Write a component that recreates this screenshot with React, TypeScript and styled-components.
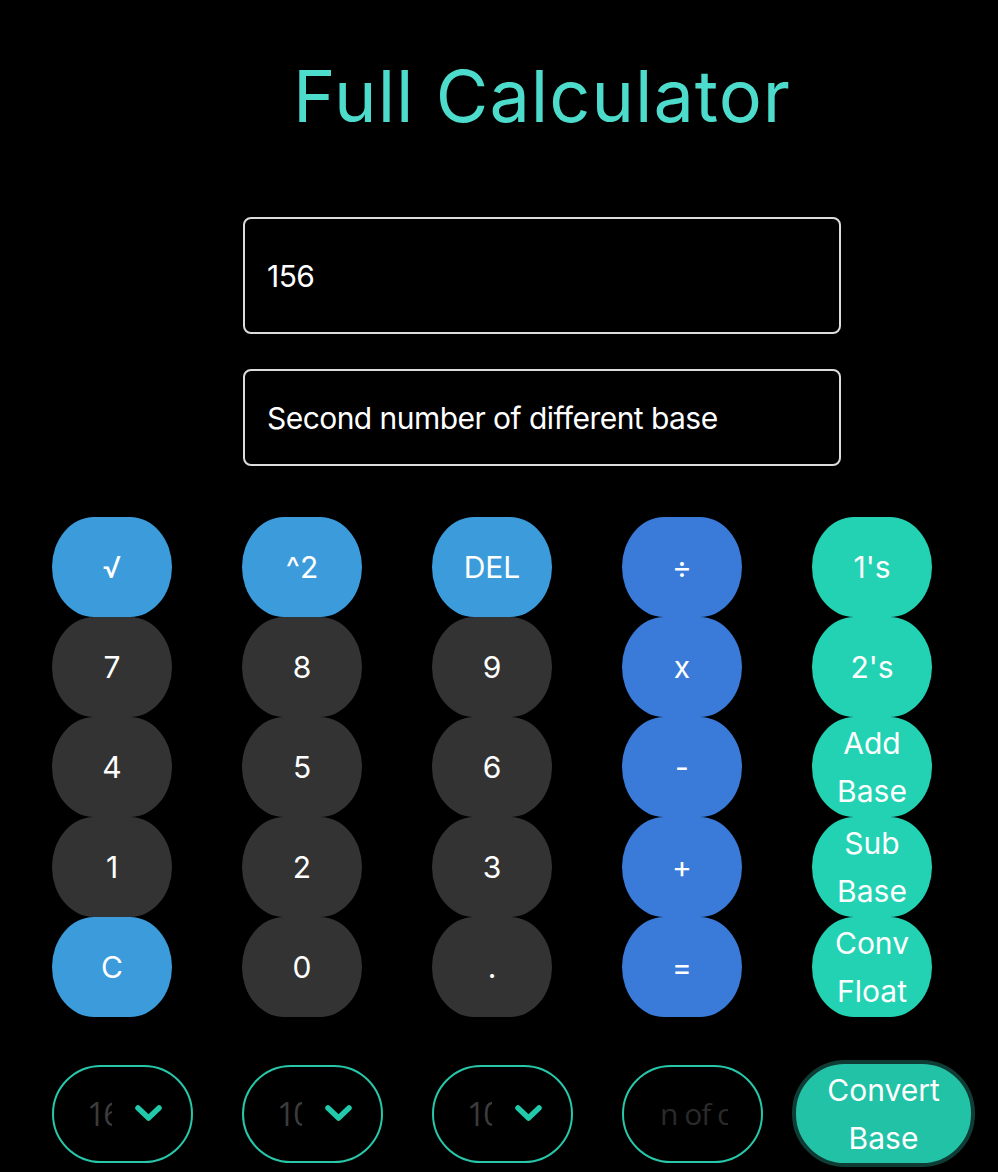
import React from "react";
import styled, { createGlobalStyle } from "styled-components";

const GlobalStyle = createGlobalStyle`
  html, body {
    margin: 0;
    padding: 0;
    background: #000;
  }
  body {
    font-family: Inter, "Liberation Sans", sans-serif;
    color: #fff;
  }
  * { box-sizing: border-box; }
`;

const Page = styled.div`
  width: 998px;
  min-height: 1172px;
  background: #000;
  padding-top: 60px;
  overflow: hidden;
`;

const Header = styled.div`
  margin-left: 86px;
  display: flex;
  flex-direction: column;
  align-items: center;
`;

const Title = styled.h1`
  margin: 0;
  font-family: Inter, "Liberation Sans", sans-serif;
  font-weight: 400;
  font-size: 72px;
  line-height: 72px;
  letter-spacing: 1px;
  color: #4ddccb;
`;

const Field = styled.input<{ $h: number; $mt: number }>`
  width: 598px;
  height: ${(p) => p.$h}px;
  margin-top: ${(p) => p.$mt}px;
  background: #000;
  border: 2px solid #dcdcdc;
  border-radius: 8px;
  padding: 0 22px;
  font-family: Inter, "Liberation Sans", sans-serif;
  font-size: 30px;
  letter-spacing: -0.55px;
  color: #fff;
  outline: none;
  &::placeholder {
    color: #fff;
    opacity: 1;
  }
`;

const Keypad = styled.div`
  margin: 51px 0 0 52px;
  display: grid;
  grid-template-columns: repeat(5, 120px);
  grid-auto-rows: 100px;
  column-gap: 70px;
`;

type Tone = "light" | "dark" | "op" | "teal";
const toneColor: Record<Tone, string> = {
  light: "#3b9bdb",
  dark: "#333333",
  op: "#3a7ad8",
  teal: "#22d2b3",
};

const Key = styled.button<{ $tone: Tone }>`
  width: 120px;
  height: 100px;
  border: none;
  border-radius: 42px / 50px;
  background: ${(p) => toneColor[p.$tone]};
  color: #fff;
  font-family: Inter, "Liberation Sans", sans-serif;
  font-size: 30px;
  line-height: 48px;
  padding: 0;
  display: flex;
  align-items: center;
  justify-content: center;
  text-align: center;
  cursor: pointer;
`;

const BottomRow = styled.div`
  margin: 43px 0 0 52px;
  display: flex;
  align-items: center;
  gap: 49px;
`;

const SelectBox = styled.div`
  width: 141px;
  height: 98px;
  border: 2px solid #27c7aa;
  border-radius: 49px;
  display: flex;
  align-items: center;
  padding-left: 33px;
  gap: 23px;
`;

const SelectValue = styled.span`
  width: 25px;
  overflow: hidden;
  white-space: nowrap;
  font-family: "Open Sans", "Liberation Sans", sans-serif;
  font-size: 32px;
  letter-spacing: -2px;
  color: #3c3c3c;
`;

const Chevron = styled.svg`
  width: 27px;
  height: 17px;
  flex: none;
`;

const TextBox = styled.div`
  width: 141px;
  height: 98px;
  border: 2px solid #27c7aa;
  border-radius: 49px;
  display: flex;
  align-items: center;
  padding-left: 36px;
`;

const TextValue = styled.span`
  width: 68px;
  overflow: hidden;
  white-space: nowrap;
  font-family: "Open Sans", "Liberation Sans", sans-serif;
  font-size: 30px;
  letter-spacing: -1px;
  color: #2a2a2a;
`;

const ConvertButton = styled.button`
  margin-left: -20px;
  width: 183px;
  height: 107px;
  border: 4px solid #0f3d36;
  border-radius: 53px;
  background: #22c2a6;
  color: #fff;
  font-family: Inter, "Liberation Sans", sans-serif;
  font-size: 30px;
  line-height: 48px;
  padding: 0;
  cursor: pointer;
`;

const keys: { label: React.ReactNode; tone: Tone }[] = [
  { label: "√", tone: "light" },
  { label: "^2", tone: "light" },
  { label: "DEL", tone: "light" },
  { label: "÷", tone: "op" },
  { label: "1's", tone: "teal" },
  { label: "7", tone: "dark" },
  { label: "8", tone: "dark" },
  { label: "9", tone: "dark" },
  { label: "x", tone: "op" },
  { label: "2's", tone: "teal" },
  { label: "4", tone: "dark" },
  { label: "5", tone: "dark" },
  { label: "6", tone: "dark" },
  { label: "-", tone: "op" },
  { label: <>Add<br />Base</>, tone: "teal" },
  { label: "1", tone: "dark" },
  { label: "2", tone: "dark" },
  { label: "3", tone: "dark" },
  { label: "+", tone: "op" },
  { label: <>Sub<br />Base</>, tone: "teal" },
  { label: "C", tone: "light" },
  { label: "0", tone: "dark" },
  { label: ".", tone: "dark" },
  { label: "=", tone: "op" },
  { label: <>Conv<br />Float</>, tone: "teal" },
];

const ChevronIcon = () => (
  <Chevron viewBox="0 0 27 17">
    <path d="M3 3 L13.5 13 L24 3" fill="none" stroke="#22c9ab" strokeWidth="5.5" strokeLinecap="round" strokeLinejoin="round" />
  </Chevron>
);

export default function App() {
  return (
    <Page>
      <GlobalStyle />
      <Header>
        <Title>Full Calculator</Title>
        <Field $h={117} $mt={85} value="156" readOnly />
        <Field $h={97} $mt={35} placeholder="Second number of different base" />
      </Header>
      <Keypad>
        {keys.map((k, i) => (
          <Key key={i} $tone={k.tone}>
            <span>{k.label}</span>
          </Key>
        ))}
      </Keypad>
      <BottomRow>
        {["16", "10", "10"].map((v, i) => (
          <SelectBox key={i}>
            <SelectValue>{v}</SelectValue>
            <ChevronIcon />
          </SelectBox>
        ))}
        <TextBox>
          <TextValue>n of c</TextValue>
        </TextBox>
        <ConvertButton>
          Convert
          <br />
          Base
        </ConvertButton>
      </BottomRow>
    </Page>
  );
}
